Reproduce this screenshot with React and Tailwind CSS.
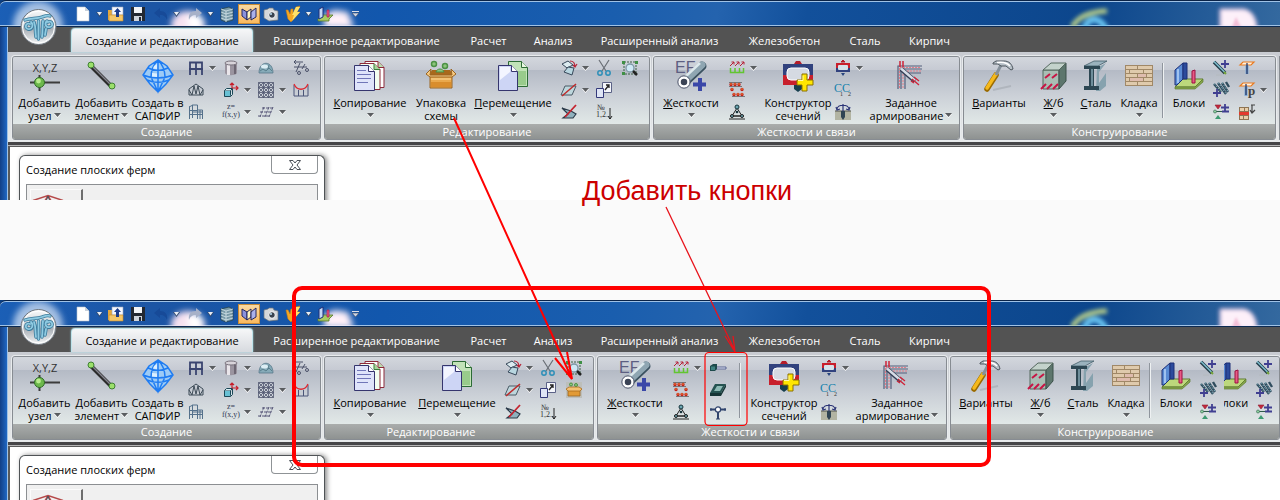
import React from 'react'

const Big = ({ children }) => (
  <svg width="32" height="32" viewBox="0 0 32 32" className="block shrink-0 overflow-visible" aria-hidden="true">{children}</svg>
)
const Small = ({ children }) => (
  <svg width="16" height="16" viewBox="0 0 16 16" className="block shrink-0 overflow-visible" aria-hidden="true">{children}</svg>
)

/* ---------- big icons ---------- */

const NodeIcon = () => (
  <Big>
    <text x="16" y="12" textAnchor="middle" fontFamily="Open Sans" fontSize="11" fill="#333">X,Y,Z</text>
    <path d="M1 22.500h30M10.500 15v16" stroke="#3c3c3c" strokeWidth="2" />
    <circle cx="10.500" cy="22.500" r="5" fill="#6cb84c" stroke="#2f6b28" />
    <circle cx="9.500" cy="21" r="2.400" fill="#b9ec8d" />
  </Big>
)
const ElementIcon = () => (
  <Big>
    <path d="M5 6L26 27" stroke="#2b2b2b" strokeWidth="4" />
    <path d="M5 5L26 26" stroke="#85858f" strokeWidth="1.500" />
    <circle cx="5" cy="5" r="3" fill="#9be06a" stroke="#3f7f33" />
    <circle cx="26" cy="26" r="3" fill="#9be06a" stroke="#3f7f33" />
  </Big>
)
const SapphireIcon = () => (
  <Big>
    <path d="M16 0L25 6L31 15L24 24L16 32L8 24L1 15L7 6Z" fill="#9dcbf5" />
    <path d="M16 0L7 6L1 15L8 24L16 32L24 24L31 15L25 6ZM16 0V32M16 0C11 5 9 10 9 17L16 32L23 17C23 10 21 5 16 0M6 8C12 11 20 11 26 8M1 15C10 19 22 19 31 15M5 20C12 23 20 23 27 20" fill="none" stroke="#1f7cf2" strokeWidth="1.500" />
    <path d="M12 6l3-2v5l-4-.5zM10 13l5 .5V17l-5-.5z" fill="#dcefff" />
  </Big>
)
const CopyIcon = () => (
  <Big>
    <path d="M11 1.500h13l6 6v20H11z" fill="#fff" stroke="#8d2a3a" />
    <path d="M24 1.500v6h6" fill="#b9dcae" stroke="#8d2a3a" />
    <path d="M6 3.500h14l6 6v20H6z" fill="#f3fff0" stroke="#8d2a3a" />
    <path d="M20 3.500v6h6" fill="#a6d69a" stroke="#3b7a3b" />
    <path d="M.5 5.500h14l6 6v19H.5z" fill="#dfe4fa" stroke="#35356e" />
    <path d="M14.500 5.500v6h6" fill="#fff" stroke="#35356e" />
    <path d="M3 10.500h9M3 14.500h14M3 18.500h14M3 22.500h11" stroke="#7076b8" strokeWidth="1.200" />
  </Big>
)
const PackIcon = () => (
  <Big>
    <circle cx="9" cy="4" r="2.500" fill="#8dc47c" stroke="#4b9145" strokeWidth="1.500" />
    <circle cx="20" cy="6" r="2.500" fill="#8dc47c" stroke="#4b9145" strokeWidth="1.500" />
    <path d="M5 14h22v14H5z" fill="#e9a84c" stroke="#9a6522" />
    <path d="M7 10h18l3 5H4z" fill="#a8691c" />
    <path d="M11 12c1-4 7-4 8 0z" fill="#8dc47c" stroke="#4b9145" />
    <path d="M6 9L1 14l4 3h22l4-3-5-5 1 6H5z" fill="#f7cb83" stroke="#9a6522" />
    <path d="M6 22h20v5H6z" fill="#d98d2c" />
    <path d="M6 19h20" stroke="#fbdc9f" />
  </Big>
)
const MoveIcon = () => (
  <Big>
    <path d="M11.500 1.500h13l6 6v19h-19z" fill="#c2e3b8" stroke="#2c6b35" />
    <path d="M24.500 1.500v6h6" fill="#e9f7e3" stroke="#2c6b35" />
    <path d="M21 11h8v14h-8z" fill="#98cb8b" />
    <path d="M1.500 5.500h13l6 6v19h-19z" fill="#cdd5f5" stroke="#35356e" />
    <path d="M3 7h10v5L3 20z" fill="#f3f5ff" />
    <path d="M14.500 5.500v6h6" fill="#fff" stroke="#35356e" />
  </Big>
)
const StiffIcon = () => (
  <Big>
    <text x="0" y="13" fontFamily="Liberation Sans" fontSize="16" fill="#5d5f82">EF</text>
    <path d="M25 18v13M18 24.500h13" stroke="#3a47a8" strokeWidth="4" />
    <path d="M11 21L27 6" stroke="#3b5260" strokeWidth="9" strokeLinecap="round" />
    <path d="M11 20L27 5" stroke="#8fa6b2" strokeWidth="7" strokeLinecap="round" />
    <path d="M10 17L25 3" stroke="#dce8ec" strokeWidth="2.500" />
    <circle cx="9" cy="22" r="4.500" fill="#3b4355" stroke="#fff" strokeWidth="2.500" />
    <circle cx="9" cy="22" r="6.200" fill="none" stroke="#555b70" />
  </Big>
)
const SectionIcon = () => (
  <Big>
    <path d="M12 4l2-3h4l2 3z" fill="#b41d2a" />
    <path d="M1 4h30v11H1z" fill="#31427e" />
    <path d="M1 15h30v10H1z" fill="#c81f2c" />
    <rect x="5" y="8" width="22" height="12" rx="4" fill="#d5dae2" stroke="#fff" />
    <path d="M12 25h8v4l-4 3-4-3z" fill="#173f4e" />
    <path d="M20 14h5v6h6v5h-6v6h-5v-6h-5v-5h5z" fill="#ffe600" stroke="#8b7100" />
    <path d="M21 15.500v5h-5" fill="none" stroke="#fff9a8" />
  </Big>
)
const RebarIcon = () => (
  <Big>
    <path d="M3 29V6h24M6 29V9h21M10 29V13h16" fill="none" stroke="#54607c" strokeWidth="1.200" />
    <path d="M4.500 28V7.500H26M8 28V11h18" fill="none" stroke="#e27c88" strokeDasharray="2 1" />
    <path d="M5 1v6M8 1v6" stroke="#cf2338" strokeWidth="1.500" />
    <path d="M6 9L20 21" stroke="#343d54" strokeWidth="4.500" />
    <path d="M6 8.500L20 20.500" stroke="#d7dde6" strokeWidth="2.500" />
    <path d="M17 19l7 6M19 17l5 4M16 21l3 2" stroke="#cf2338" strokeWidth="1.300" />
  </Big>
)
const HammerIcon = () => (
  <Big>
    <path d="M10 30l18-4" stroke="#9da3aa" strokeWidth="2" opacity=".5" />
    <path d="M4 29L13 15" stroke="#9b6b00" strokeWidth="5.500" strokeLinecap="round" />
    <path d="M4 28L13 14" stroke="#f5b91c" strokeWidth="3.500" strokeLinecap="round" />
    <path d="M13 15L18 5" stroke="#85909a" strokeWidth="3" />
    <path d="M10 3l3-2 8 0c5 0 8 3 9 8l-2 1-5-4-5 0-3-2-5 0z" fill="#b8c1c8" stroke="#4c555d" />
    <path d="M14 2.500c6-1 10 0 13 3.500" fill="none" stroke="#fff" strokeWidth="1.500" />
  </Big>
)
const ConcreteIcon = () => (
  <Big>
    <path d="M5 10h16v19H5z" fill="#a9beb4" stroke="#55685f" />
    <path d="M21 10l7-7v18l-7 8z" fill="#5d766d" stroke="#3c514a" />
    <path d="M5 10l8-7h15l-7 7z" fill="#c3d2cb" stroke="#55685f" />
    <path d="M7 18l5-4M14 18l5-4M3 29l5-5M9 29l5-5M15 29l5-5" stroke="#c71645" strokeWidth="2" />
  </Big>
)
const SteelIcon = () => (
  <Big>
    <path d="M4 6L14 1h13L18 6z" fill="#9ab2bd" stroke="#35505c" strokeWidth=".7" />
    <path d="M17 8l9-5-7 9v11l7-10v13l-6 5h-4z" fill="#86a2ae" />
    <path d="M4 6h16v3h-6v17h5v4H4v-4h5V9H4z" fill="#2d4753" />
    <path d="M11 9h2v17h-2z" fill="#6e8e9b" />
  </Big>
)
const BrickIcon = () => (
  <Big>
    <path d="M2 5h28v21H2z" fill="#a08867" />
    <path d="M3 6h11v3H3zM15 6h14v3H15zM3 10h3v3H3zM7 10h13v3H7zM21 10h8v3h-8zM3 14h11v3H3zM15 14h8v3h-8zM24 14h5v3h-5zM3 18h3v3H3zM7 18h13v3H7zM21 18h8v3h-8zM3 22h11v3H3zM15 22h14v3H15z" fill="#dfcaac" />
    <path d="M15 14h8v3h-8zM7 18h13v3H7z" fill="#dfbcae" />
  </Big>
)
const BlocksIcon = () => (
  <Big>
    <path d="M2 27l8-8h20l-8 8z" fill="#bcd87c" stroke="#5f7c31" />
    <path d="M2 27h20l8-8v3l-8 7H2z" fill="#85a54b" stroke="#5f7c31" strokeWidth=".7" />
    <path d="M2 10l8-7v16l-6 6H2z" fill="#5a8bd4" stroke="#1c2e76" />
    <path d="M10 3h4v16h-4z" fill="#2b4a9c" stroke="#1c2e76" />
    <path d="M5 9v14" stroke="#b9d4f8" strokeWidth="1.500" />
    <path d="M19 11l3-1v13h-3z" fill="#e75b85" stroke="#9c1040" />
  </Big>
)

/* ---------- small icons ---------- */

const S = {
  frame: <Small><path d="M2 15V2.500h12V15M1 9h14M8 2v13" fill="none" stroke="#3a4470" strokeWidth="1.800" /></Small>,
  truss: <Small><path d="M1 13V7l7-5 7 5v6zM1 8l3 5 2-9 2 8 2-8 2 9 3-5" fill="none" stroke="#3d4b57" /></Small>,
  building: <Small><path d="M1.500 15V2.500M4.500 14V1h5v14M1 3l4-2M1 6.500h9M1 10.500h14M10 6h4.500v9M5 8h9M12 6v9" fill="none" stroke="#54718b" /></Small>,
  cylinder: <Small><path d="M2 3v10c1 3 11 3 12 0V3" fill="#9a949f" /><path d="M4 4v11h3V4z" fill="#e9e5ea" /><path d="M12 4v10" stroke="#6d6773" strokeWidth="2" /><ellipse cx="8" cy="3" rx="6" ry="2" fill="#d8d4da" stroke="#77717b" /></Small>,
  extrude: <Small><path d="M1.500 8.500h6v6h-6z" fill="#68c0d4" stroke="#1b4756" /><path d="M1.500 8.500l2-2h6l-2 2M9.500 6.500v6l-2 2" fill="#d9edf2" stroke="#1b4756" /><path d="M9 6V1M7 3l2-2 2 2M9 6h6M13 4l2 2-2 2" fill="none" stroke="#c6202c" strokeWidth="1.200" /></Small>,
  func: <Small><text x="8" y="5" textAnchor="middle" fontFamily="Liberation Serif" fontSize="8" fill="#333b55">z=</text><text x="8" y="13" textAnchor="middle" fontFamily="Liberation Serif" fontSize="8" fill="#333b55">f(x,y)</text></Small>,
  dome: <Small><path d="M1 13C1 0 15 0 15 13z" fill="#86aab8" stroke="#58798a" strokeWidth=".8" /><ellipse cx="6.500" cy="6.500" rx="3.500" ry="2" fill="#dceef4" /><path d="M2 11l3-2 3 2 3-3 3 3M11 5l-1 4" stroke="#4f7583" fill="none" strokeWidth=".8" /></Small>,
  mesh: <Small><path d="M.5.500h15v15H.5zM5.500.5v15M10.500.5v15M.5 5.500h15M.5 10.500h15M.5.500l15 15M15.500.5l-15 15M.5 5.500l5-5 10 10-5 5-10-10M.5 10.500l10-10 5 5-10 10z" fill="none" stroke="#4f566e" strokeWidth=".8" /></Small>,
  slab: <Small><path d="M4 4h12M2 8h12M0 12h12M6 3L2 13M11 3L7 13M15 3l-4 10" stroke="#59597a" strokeDasharray="3 1" /></Small>,
  beams: <Small><path d="M1 2h9M3 0L1 2l2 2M3 12l4-9M1 7h13M9 9l3-5" fill="none" stroke="#4b5169" /><circle cx="14" cy="10" r="1.500" fill="none" stroke="#4b5169" /><circle cx="6" cy="13" r="1.500" fill="none" stroke="#4b5169" /></Small>,
  sag: <Small><path d="M1 3v11h14V3M5.500 8v6M10.500 8v6" fill="none" stroke="#4b5578" /><path d="M1 2c3 7 11 7 14 0" fill="none" stroke="#e02830" strokeWidth="1.300" /></Small>,
  rotate: <Small><path d="M1 4l6-3 5 4-6 3z" fill="#dcebf0" stroke="#37485a" /><path d="M3 12l4-5 6 1-2 7z" fill="#b8d6e0" stroke="#37485a" /><path d="M9 1c3 0 5 2 5 6M12 5l2 2 2-3" fill="none" stroke="#b62438" strokeWidth="1.200" /></Small>,
  mirror: <Small><path d="M4 4h11l-4 9H0z" fill="#bdd6dc" stroke="#4a5a66" /><path d="M1 14L15 2" stroke="#bf2a2a" strokeWidth="1.500" /></Small>,
  erase: <Small><path d="M1 4l6 6-5 4h10l3-4-5-3z" fill="#8fb1bd" stroke="#2d3c4b" strokeWidth="1.200" /><path d="M4 13L15 1" stroke="#c4232f" strokeWidth="1.800" /></Small>,
  cut: <Small><path d="M3 0l7 11M13 0L6 11" stroke="#6a6f76" strokeWidth="1.200" /><circle cx="4" cy="13" r="2.200" fill="none" stroke="#2e8fb8" strokeWidth="1.500" /><circle cx="12" cy="13" r="2.200" fill="none" stroke="#2e8fb8" strokeWidth="1.500" /></Small>,
  scale: <Small><path d="M6.500.5h9v10h-9z" fill="#f4f6fb" stroke="#5b6286" /><path d="M.5 6.500h7v9h-7z" fill="#dfe5f5" stroke="#33397a" /><path d="M9 8l4-5M10 3h3v3" fill="none" stroke="#222" strokeWidth="1.300" /></Small>,
  number: <Small><text x="1" y="6" fontFamily="Liberation Serif" fontSize="8" fill="#333">№</text><text x="0" y="13" fontFamily="Liberation Serif" fontSize="8" fill="#333">1,2..</text><path d="M14 4v11M12 12l2 3 2-3" fill="none" stroke="#222" /></Small>,
  zoom: <Small><path d="M2 2h12v12H2z" fill="none" stroke="#3c5e44" strokeDasharray="2 1" /><path d="M0 1h3v3H0zM13 1h3v3h-3zM0 12h3v3H0z" fill="#3f9045" /><circle cx="8" cy="8" r="4" fill="#cfe8f5" stroke="#7d98a5" strokeWidth="1.300" /><path d="M11 11l4 4" stroke="#222" strokeWidth="2.500" /></Small>,
  pack: <Small><path d="M0 0h16v16H0z" fill="#bdbfbb" /><circle cx="5" cy="2.500" r="1.500" fill="#8dc47c" stroke="#4b9145" /><circle cx="10" cy="3" r="1.500" fill="#8dc47c" stroke="#4b9145" /><path d="M2 8h12v6H2z" fill="#e29a35" stroke="#9a6522" strokeWidth=".8" /><path d="M0 7l3-2h10l3 2-2 2H2z" fill="#f4c173" stroke="#a8691c" strokeWidth=".8" /></Small>,
  loads: <Small><path d="M1 6l4-4M2.500 2H5v2.500M6 6l4-4M7.500 2H10v2.500M11 6l4-4M12.500 2H15v2.500" fill="none" stroke="#b72036" /><path d="M1.500 8v4.500h13V8M6 8v4M10.500 8v4" fill="none" stroke="#62c531" strokeWidth="1.500" /></Small>,
  springs: <Small><path d="M0 4.500h13M3 14.500h13M0 .5h13" stroke="#555" strokeWidth=".7" /><path d="M2 2.500h0M6 2.500h0M10 2.500h0M3 7.500h0M13 7.500h0M5 12.500h0M9 12.500h0M13 12.500h0" stroke="#c32018" strokeWidth="3.400" strokeLinecap="round" /><path d="M2 2h0M6 2h0M10 2h0M3 7h0M13 7h0M5 12h0M9 12h0M13 12h0" stroke="#ffb24a" strokeWidth="1.300" strokeLinecap="round" /></Small>,
  support: <Small><path d="M8 4L3 12h10zM0 15h16M1 12h14" fill="none" stroke="#222" /><circle cx="8" cy="3" r="2" fill="#6ca6b2" stroke="#18343c" /><circle cx="8" cy="8" r="1.300" fill="#18343c" /><circle cx="3" cy="12" r="1.500" fill="#6ca6b2" stroke="#222" /><circle cx="13" cy="12" r="1.500" fill="#6ca6b2" stroke="#222" /></Small>,
  section: <Small><path d="M6 2l2-2 2 2z" fill="#b41d2a" stroke="#b41d2a" /><path d="M1 3h14v5H1z" fill="#c81f2c" /><path d="M1 8h14v4H1z" fill="#31427e" /><rect x="3" y="5" width="10" height="5" rx="1" fill="#d5e2ea" /><path d="M6 13h4l-2 3z" fill="#28447d" /></Small>,
  cc: <Small><text x="-1" y="10" fontFamily="Liberation Serif" fontSize="12" fill="#1481ad">C</text><text x="7" y="10" fontFamily="Liberation Serif" fontSize="12" fill="#1481ad">C</text><text x="5" y="14" fontFamily="Liberation Serif" fontSize="6" fill="#333">1</text><text x="13" y="14" fontFamily="Liberation Serif" fontSize="6" fill="#333">2</text></Small>,
  pile: <Small><path d="M0 7h16v9H0z" fill="#b2b4a2" /><path d="M0 7h16" stroke="#50524a" /><path d="M6 7h4v6l-2 3-2-3z" fill="#2f4453" /><path d="M8 0v7M2 5c1-5 11-5 12 0M1 3l1 3 3-1M15 3l-1 3-3-1" fill="none" stroke="#2c3577" strokeWidth="1.200" /></Small>,
  rod: <Small><path d="M6 7h10v2H6z" fill="#dfe4f2" stroke="#3c4a80" strokeWidth=".8" /><path d="M0 6l3-2h4v5l-2 2H0z" fill="#1d4a4c" /><path d="M1 6.500h4V10H1z" fill="#3f8281" /></Small>,
  plate: <Small><path d="M0 11L5 2h11l-5 9z" fill="#255351" /><path d="M4 9l3-5h6l-3 5z" fill="#8dbab5" /><path d="M0 11h11l5-9v3l-5 9H0z" fill="#163536" /></Small>,
  hinge: <Small><path d="M0 5.500h5M11 5.500h5M8 8v7" stroke="#31456e" strokeWidth="2" /><path d="M1 4v3M15 4v3M6 15h4" stroke="#31456e" strokeWidth="1" /><circle cx="8" cy="5.500" r="2.600" fill="#fff" stroke="#31456e" strokeWidth="1.200" /></Small>,
  addBar: <Small><path d="M1 2l11 11" stroke="#243c48" strokeWidth="3.500" /><path d="M1 1.500l11 11" stroke="#7dbccc" strokeWidth="1.500" /><path d="M12 0v8M8 4h8" stroke="#403f91" strokeWidth="1.800" /><path d="M11 12l2 2" stroke="#77a53a" strokeWidth="2" /><path d="M3 15h6" stroke="#b4babe" /></Small>,
  addBars: <Small><path d="M1 2l7 8M5 1l8 11M9 1l6 9M13 0l3 5" stroke="#304d5e" strokeWidth="2.400" /><path d="M1 1.500l7 8M5 .5l8 11M9 .5l6 9" stroke="#86b7c6" strokeDasharray="1.500 1.500" /><path d="M4 7v8M0 11h8" stroke="#403f91" strokeWidth="1.800" /></Small>,
  levels: <Small><path d="M2 1h6L5 5z" fill="#c4283d" stroke="#8e1d30" strokeWidth=".6" /><path d="M2 15h6l-3-4z" fill="#3d9a71" /><path d="M1 7.500h14" stroke="#2e5c4a" /><circle cx="2" cy="7.500" r="1.500" fill="#8fd09f" stroke="#2e5c4a" strokeWidth=".6" /><path d="M12 0v7M8 3.500h8M9 7.500h7" stroke="#403f91" strokeWidth="1.800" /></Small>,
  column: <Small><path d="M4 2h11l-3 3H1z" fill="#fff3e2" stroke="#ea7a1e" strokeWidth="1.200" /><path d="M8 5v9" stroke="#7ca7d6" strokeWidth="3" /><path d="M8 3v11" stroke="#1d2c5a" strokeWidth="1.200" /></Small>,
  columnP: <Small><path d="M4 1h11l-3 3H1z" fill="#fff3e2" stroke="#ea7a1e" strokeWidth="1.200" /><path d="M7 4v10" stroke="#7ca7d6" strokeWidth="3" /><path d="M7 2v11" stroke="#1d2c5a" strokeWidth="1.200" /><text x="9" y="13" fontFamily="Liberation Serif" fontSize="13" fontWeight="bold" fill="#444">p</text></Small>,
  wallLoad: <Small><path d="M0 3h10v13H0z" fill="#8f7453" /><path d="M1 4h4v3H1zM6 4h3v3H6zM1 12h3v3H1zM5 12h4v3H5z" fill="#e8cfab" /><path d="M0 8h10v3H0z" fill="#e33a2d" /><path d="M12 1h4M13 1v8M11 6l2 3 3-3" fill="none" stroke="#444" strokeWidth="1.200" /></Small>,
}

const Q = {
  doc: <Small><path d="M2 1h8l4 4v10H2z" fill="#fff" stroke="#b9c2cc" strokeWidth=".6" /><path d="M10 1v4h4z" fill="#c9d2db" /></Small>,
  open: <Small><path d="M0 4h4V2h11v12H0z" fill="#e5a83c" /><path d="M4 1h11v8H4z" fill="#f4f8ff" stroke="#9aa6b8" strokeWidth=".6" /><path d="M1 9h14v6H1z" fill="#f3c768" stroke="#c88a2c" strokeWidth=".6" /><path d="M8 11V6H6l3.500-4L13 6h-2v5z" fill="#1d3e8c" /></Small>,
  save: <Small><path d="M1 1h14v14H1z" fill="#232831" /><path d="M4 1h8v6H4z" fill="#f2f4f7" /><path d="M4 10h8v5H4z" fill="#cfd5dd" /><path d="M9 11h2v4H9z" fill="#232831" /></Small>,
  undo: <Small><path d="M1 7l6-5v3c5 0 8 3 7 9-1-3-3-5-7-5v3z" fill="#174a98" /></Small>,
  redo: <Small><path d="M15 7L9 2v3C4 5 1 8 2 14c1-3 3-5 7-5v3z" fill="#a7b1c8" /></Small>,
  model: <Small><path d="M2 3l8-2 4 2v11l-7 2-5-2z" fill="#799aa8" stroke="#22404e" strokeWidth=".8" /><path d="M2 3l5 2v11M7 5l7-2M2 6l5 2 7-2M2 9l5 2 7-2M2 12l5 2 7-2" fill="none" stroke="#d6e4ea" strokeWidth=".8" /></Small>,
  book: <Small><path d="M1 3l5 3v8l-5-4z" fill="#8b92dc" stroke="#24275f" /><path d="M6 6l4-3v8l-4 3z" fill="#fff4c0" stroke="#24275f" /><path d="M10 6l5-4v9l-5 3z" fill="#aab0ea" stroke="#24275f" /></Small>,
  camera: <Small><path d="M1 4l4-1 1-1h4l1 2 4 1v9L6 15l-5-3z" fill="#d4d7da" stroke="#6c7278" strokeWidth=".7" /><circle cx="9" cy="9" r="3.300" fill="#39434f" stroke="#fff" /><circle cx="8" cy="8" r="1" fill="#bfe1f5" /></Small>,
  bolt: <Small><path d="M1 4l2 0 2 4 1-5 2 0 0 5 3-7 4-1-3 6h3L6 16 3 13z" fill="#f6a823" stroke="#c8801a" strokeWidth=".6" /><path d="M11 1h4l-3 5h3l-8 9 2-6H7z" fill="#ffe26a" /></Small>,
  blocks: <Small><path d="M1 13l4-4h11l-4 4v2H1z" fill="#a9cb63" stroke="#55772b" strokeWidth=".8" /><path d="M2 3l4-2v10l-4 2z" fill="#c3d8f6" stroke="#1c2e76" /><path d="M10 4h2v7h-2z" fill="#e75b85" stroke="#9c1040" strokeWidth=".6" /></Small>,
}

/* ---------- ribbon parts ---------- */

const Caret = ({ className = '' }) => (
  <svg width="7" height="5" viewBox="0 0 7 5" className={`inline-block shrink-0 ${className}`} aria-hidden="true">
    <path d="M0 1h7L3.500 5z" fill="#fff" />
    <path d="M0 0h7L3.500 4z" fill="#5a5d60" />
  </svg>
)

// first letter underlined when `hot` is set
function BigButton({ icon, label, second, hot, caret, className }) {
  return (
    <button type="button" className={`flex shrink-0 flex-col items-center pt-[3px] whitespace-nowrap ${className}`}>
      {icon}
      <span className="mt-1 block leading-[13px]">
        {hot ? <><u className="underline underline-offset-1">{label[0]}</u>{label.slice(1)}</> : label}
      </span>
      <span className="flex h-[13px] items-center gap-[2px] leading-[13px]">
        {second}
        {caret && <Caret />}
      </span>
    </button>
  )
}

// rows: list of rows, every cell is [name, withCaret]
function Tools({ cols, rows, className = '' }) {
  return (
    <div className={`grid shrink-0 auto-rows-[22px] ${cols} ${className}`}>
      {rows.flat().map((cell, i) => (
        cell ? (
          <div key={i} className="flex items-center gap-[5px]">
            <button type="button" aria-label={cell[0]}>{S[cell[0]]}</button>
            {cell[1] && <button type="button" aria-label={`${cell[0]} ▾`} className="flex"><Caret /></button>}
          </div>
        ) : <div key={i} />
      ))}
    </div>
  )
}

const Separator = ({ className = '' }) => (
  <div className={`mt-[6px] h-[55px] w-px shrink-0 bg-[#8f959d] shadow-[1px_0_0_#eef1f2] ${className}`} />
)

function Panel({ title, className = '', titleClass = 'w-full', children }) {
  return (
    <section className={`flex shrink-0 flex-col overflow-hidden rounded-[3px] border border-[#878c92] shadow-[0_0_0_1px_#e8ebed] ${className}`}>
      <div className="flex h-[67px] bg-[linear-gradient(#d3d7dd_0,#c6cad3_13px,#b4bac5_13px,#cbd0d7_38px,#e1e8e7_67px)]">{children}</div>
      <div className="h-[15px] bg-linear-to-b from-[#aaadac] to-[#8e9291]">
        <h2 className={`text-center leading-[15px] text-white ${titleClass}`}>{title}</h2>
      </div>
    </section>
  )
}

const tabs = [
  ['Расширенное редактирование', 'w-[197px]'],
  ['Расчет', 'w-[67px]'],
  ['Анализ', 'w-[62px]'],
  ['Расширенный анализ', 'w-[151px]'],
  ['Железобетон', 'w-[99px]'],
  ['Сталь', 'w-[62px]'],
  ['Кирпич', 'w-[67px]'],
]

const editRows = [
  [['rotate', true], ['cut'], ['zoom']],
  [['mirror', true], ['scale'], null],
  [['erase'], ['number'], null],
]
const editRowsPacked = [editRows[0], [['mirror', true], ['scale'], ['pack']], editRows[2]]
const barRows = [[['addBar']], [['addBars']], [['levels']]]

function CreatePanel() {
  return (
    <Panel title="Создание" className="w-[309px]">
      <BigButton icon={<NodeIcon />} label="Добавить" second="узел" caret className="ml-[3px] w-[57px]" />
      <BigButton icon={<ElementIcon />} label="Добавить" second="элемент" caret className="w-[57px]" />
      <BigButton icon={<SapphireIcon />} label="Создать в" second="САПФИР" className="w-[55px]" />
      <Tools
        className="ml-[3px]"
        cols="grid-cols-[35px_35px_35px_16px]"
        rows={[
          [['frame', true], ['cylinder', true], ['dome'], ['beams']],
          [['truss'], ['extrude', true], ['mesh', true], ['sag']],
          [['building'], ['func', true], ['slab', true], null],
        ]}
      />
    </Panel>
  )
}

function EditPanel({ packed }) {
  return (
    <Panel
      title="Редактирование"
      className={packed ? 'w-[270px]' : 'w-[326px]'}
      titleClass={packed ? 'w-[212px]' : 'w-full'}
    >
      <BigButton icon={<CopyIcon />} label="Копирование" hot caret className="ml-1 w-[82px]" />
      {!packed && <BigButton icon={<PackIcon />} label="Упаковка" second="схемы" className="w-[60px]" />}
      <BigButton icon={<MoveIcon />} label="Перемещение" hot caret className={packed ? 'ml-1 w-[84px]' : 'w-[84px]'} />
      <Tools className="ml-[6px]" cols="grid-cols-[35px_26px_16px]" rows={packed ? editRowsPacked : editRows} />
    </Panel>
  )
}

function StiffnessPanel({ extended }) {
  return (
    <Panel
      title="Жесткости и связи"
      className={extended ? 'w-[350px]' : 'w-[307px]'}
      titleClass={extended ? 'w-[305px]' : 'w-full'}
    >
      <BigButton icon={<StiffIcon />} label="Жесткости" hot caret className="ml-px w-[72px]" />
      <Tools className="ml-[2px]" cols="grid-cols-[33px]" rows={[[['loads', true]], [['springs']], [['support']]]} />
      {extended && (
        <>
          <Tools className="ml-1" cols="grid-cols-[16px]" rows={[[['rod']], [['plate']], [['hinge']]]} />
          <Separator className="mr-2 ml-[13px]" />
        </>
      )}
      <BigButton icon={<SectionIcon />} label="Конструктор" second="сечений" className="w-[72px]" />
      <Tools className="ml-px" cols="grid-cols-[33px]" rows={[[['section', true]], [['cc']], [['pile']]]} />
      <BigButton icon={<RebarIcon />} label="Заданное" second="армирование" caret className="w-[86px]" />
    </Panel>
  )
}

function DesignPanel({ extended }) {
  return (
    <Panel
      title="Конструирование"
      className={extended ? 'flex-1' : 'w-[313px]'}
      titleClass={extended ? 'w-[309px]' : 'w-full'}
    >
      <BigButton icon={<HammerIcon />} label="Варианты" hot className="ml-[2px] w-[66px]" />
      <BigButton icon={<ConcreteIcon />} label="Ж/б" hot caret className="w-[43px]" />
      <BigButton icon={<SteelIcon />} label="Сталь" hot className="w-[42px]" />
      <BigButton icon={<BrickIcon />} label="Кладка" caret className="w-[44px]" />
      <Separator className="mr-1 ml-px" />
      <BigButton icon={<BlocksIcon />} label="Блоки" className="w-[44px]" />
      {extended ? (
        <>
          <Tools className="ml-[2px]" cols="grid-cols-[16px]" rows={barRows} />
          <div className="ml-2 flex w-[30px] shrink-0 justify-end overflow-hidden">
            <BigButton icon={<BlocksIcon />} label="Блоки" className="w-[44px]" />
          </div>
          <Tools className="ml-[2px]" cols="grid-cols-[16px]" rows={barRows} />
        </>
      ) : (
        <Tools
          className="ml-[2px]"
          cols="grid-cols-[26px_28px]"
          rows={[[['addBar'], ['column']], [['addBars'], ['columnP', true]], [['levels'], ['wallLoad']]]}
        />
      )}
    </Panel>
  )
}

const QuickButton = ({ name, className = '' }) => (
  <button type="button" aria-label={name} className={`shrink-0 ${className}`}>{Q[name]}</button>
)
const QuickCaret = ({ className = '' }) => (
  <svg width="7" height="5" viewBox="0 0 7 5" className={`shrink-0 ${className}`} aria-hidden="true">
    <path d="M0 0h7L3.500 5z" fill="#33496b" />
    <path d="M1 0h5L3.500 3.500z" fill="#e8eef6" />
  </svg>
)

function TitleBar() {
  return (
    <div className="relative flex h-[27px] items-center overflow-hidden rounded-tl-md border-t border-b border-t-[#0a2347] border-b-[#0c2a52] bg-[linear-gradient(100deg,#1b5fb6_0%,#1c55a4_12%,#1257ad_30%,#1a5eae_48%,#2463ae_56%,#12509b_63%,#0c468c_85%,#34699f_100%)] pt-px pl-[75px] shadow-[inset_0_1px_0_#9fc2e6,inset_0_-1px_0_#9fc2e6]">
      {/* desktop showing through the glass */}
      <svg className="absolute inset-0 h-full w-full" aria-hidden="true">
        <g className="blur-[3px]">
          <circle cx="38" cy="25" r="25" fill="#d3e2f4" opacity=".75" />
          <ellipse cx="188" cy="24" rx="17" ry="14" fill="#f7e2f0" />
          <ellipse cx="195" cy="21" rx="8" ry="8" fill="#fff" />
          <path d="M324 14l10-5 14 2 6 16h-30z" fill="#fff0f8" />
        </g>
        <g className="blur-[2px]" fill="none">
          <path d="M1084 30c2-14 16-16 22-1" stroke="#6cc8f4" strokeWidth="6" />
          <path d="M1072 26c6-9 14-15 35-16" stroke="#b9cf8a" strokeWidth="5" />
          <path d="M1220 8h24c8 2 12 8 13 20h-37z" fill="#fdf0f9" stroke="#e9b8dc" />
        </g>
        <path d="M1236 16l5 10h-9z" fill="#f3bfd8" className="blur-[1px]" />
      </svg>
      <div className="relative flex items-center">
        <QuickButton name="doc" />
        <QuickCaret className="ml-[5px]" />
        <QuickButton name="open" className="ml-[5px]" />
        <QuickButton name="save" className="ml-[6px]" />
        <QuickButton name="undo" className="ml-[7px]" />
        <QuickCaret className="ml-1" />
        <QuickButton name="redo" className="ml-[7px]" />
        <QuickCaret className="ml-1" />
        <QuickButton name="model" className="ml-[5px]" />
        <QuickButton name="book" className="ml-[3px] border border-[#c98b35] bg-linear-to-b from-[#fbd9a0] to-[#f9b95e] px-[2px] py-px" />
        <QuickButton name="camera" className="ml-[3px]" />
        <QuickButton name="bolt" className="ml-[6px]" />
        <QuickCaret className="ml-1" />
        <QuickButton name="blocks" className="ml-[5px]" />
        <svg width="7" height="7" viewBox="0 0 7 7" className="ml-[19px]" aria-hidden="true">
          <path d="M0 .500h7" stroke="#d8dee8" />
          <path d="M0 2h7L3.500 6z" fill="#cfd6e2" stroke="#3a4a66" strokeWidth=".6" />
        </svg>
      </div>
    </div>
  )
}

function Logo() {
  return (
    <button type="button" aria-label="menu" className="absolute top-2 left-5">
      <svg width="37" height="38" viewBox="0 0 37 38" className="block">
        <defs>
          <linearGradient id="orb" x1="0" y1="0" x2="0" y2="1">
            <stop offset="0" stopColor="#fafbfc" />
            <stop offset=".5" stopColor="#c6cbd1" />
            <stop offset=".55" stopColor="#a9afb6" />
            <stop offset="1" stopColor="#f4f6f7" />
          </linearGradient>
        </defs>
        <circle cx="18.500" cy="19" r="17.500" fill="url(#orb)" stroke="#6e757d" />
        <circle cx="18.500" cy="19" r="16" fill="none" stroke="#fff" />
        {/* column capital: band, two volutes and flutes */}
        <g fill="none" stroke="#3a7a9b" strokeWidth="3.400" strokeLinecap="round">
          <path d="M5 12c6-2 12-1 17-3 3-1 5-2 8-1" />
          <path d="M10 16c-4-2-6 4-2 5 4 1 6-4 3-7M28 14c4-2 6 4 2 5-4 1-6-3-3-6" />
          <path d="M14 14c2 5 1 9 2 15M18.500 13v18M23 13c-1 6 0 10-1 16M26 21l-1 6" />
        </g>
        <g fill="none" stroke="#8fcbe2" strokeWidth="1.800" strokeLinecap="round">
          <path d="M5 12c6-2 12-1 17-3 3-1 5-2 8-1" />
          <path d="M10 16c-4-2-6 4-2 5 4 1 6-4 3-7M28 14c4-2 6 4 2 5-4 1-6-3-3-6" />
          <path d="M14 14c2 5 1 9 2 15M18.500 13v18M23 13c-1 6 0 10-1 16M26 21l-1 6" />
        </g>
      </svg>
    </button>
  )
}

function TrussDialog() {
  return (
    <div className="ml-[9px] w-[306px] rounded-t-md border border-b-0 border-[#4f5356] bg-white px-[6px] shadow-[2px_0_5px_#0007]">
      <div className="flex h-7 justify-between">
        <h3 className="pt-[5px] leading-[18px]">Создание плоских ферм</h3>
        <button type="button" aria-label="close" className="flex h-[18px] w-[47px] items-center justify-center rounded-b border border-t-0 border-[#8f9396] bg-white">
          <svg width="12" height="10" viewBox="0 0 12 10" aria-hidden="true">
            <path d="M.5.500h3.500L6 3 8 .5h3.500L8 5l3.500 4.500H8L6 7 4 9.500H.5L4 5z" fill="#fff" stroke="#4a4f57" />
          </svg>
        </button>
      </div>
      <div className="h-8 border border-[#8c8f92] bg-[#f0f0f0] pt-1 pl-[3px]">
        <button type="button" aria-label="truss" className="flex h-9 w-[53px] items-start border border-r-2 border-[#fbfbfb] border-r-[#6d6d6d]">
          <svg width="36" height="24" viewBox="0 0 36 24" className="mt-1 block" aria-hidden="true">
            <path d="M2 6.500L17 1.500l15 5M17 2L8 16M17 2l9 14M2 7v14" fill="none" stroke="#b64a4a" strokeWidth="1.500" />
            <path d="M17 2l-3 8M17 2l3 8" stroke="#4a5560" />
          </svg>
        </button>
      </div>
    </div>
  )
}

function AppWindow({ revised }) {
  return (
    <div className="relative overflow-hidden bg-[#0b3f83]">
      <TitleBar />
      <div className="bg-linear-to-r from-[#123f86] to-[#2068c4] to-[7px] pl-[7px]">
        <div className="border-l border-[#9fc2e6] bg-white">
          <nav className="flex h-[25px] items-end bg-[#535353] pl-[63px]">
            <button type="button" className="mr-[5px] h-[24px] w-[182px] shrink-0 rounded-t border border-b-0 border-[#bfe3ea] bg-linear-to-b from-[#f6f7f8] to-[#d7dadf] leading-[24px] whitespace-nowrap shadow-[0_0_2px_#9fe2ee]">
              Создание и редактирование
            </button>
            {tabs.map(([name, width]) => (
              <button key={name} type="button" className={`h-[24px] shrink-0 leading-[26px] whitespace-nowrap text-white ${width}`}>{name}</button>
            ))}
          </nav>
          <div className="flex gap-[3px] bg-linear-to-b from-[#c8cbd1] to-[#e6e9ea] pt-1 pb-[2px] pl-1">
            <CreatePanel />
            <EditPanel packed={revised} />
            <StiffnessPanel extended={revised} />
            <DesignPanel extended={revised} />
            {!revised && <div className="flex-1 rounded-l-[3px] border border-r-0 border-[#878c92] bg-[#c4c9d0]" />}
          </div>
          <div className="h-[5px] border-b border-[#5a5a5a] bg-[linear-gradient(#454547_3px,#b5b5b5_3px)]" />
          <main className="h-[53px] overflow-hidden border-l-2 border-[#5a5a5a] pt-2">
            <TrussDialog />
          </main>
        </div>
      </div>
      <Logo />
    </div>
  )
}

/* red markup drawn over both windows */
function Markup() {
  return (
    <div className="pointer-events-none absolute inset-0">
      <p className="absolute top-[176px] left-[582px] font-['Liberation_Sans',sans-serif] text-[27px] leading-[30px] whitespace-nowrap text-[#cc0000]">
        Добавить кнопки
      </p>
      <svg className="absolute inset-0 h-full w-full" fill="none" aria-hidden="true">
        <path d="M454 118L572 379M555 358L572 379L567 352" stroke="#f00" strokeWidth="2" />
        <path d="M666 207L735 351M725 336L735 352L733 336" stroke="#e8141c" strokeWidth="1.300" />
        <rect x="294" y="288" width="695" height="177" rx="8" stroke="#f00" strokeWidth="4" />
        <rect x="705" y="352.500" width="42" height="73" rx="4" stroke="#f00" strokeWidth="1.200" />
      </svg>
    </div>
  )
}

export default function App() {
  return (
    <div className="relative overflow-hidden bg-[#fafafa] font-['Open_Sans','Noto_Sans',sans-serif] text-[11px] text-black">
      <AppWindow />
      <div className="h-[100px]" />
      <AppWindow revised />
      <Markup />
    </div>
  )
}
